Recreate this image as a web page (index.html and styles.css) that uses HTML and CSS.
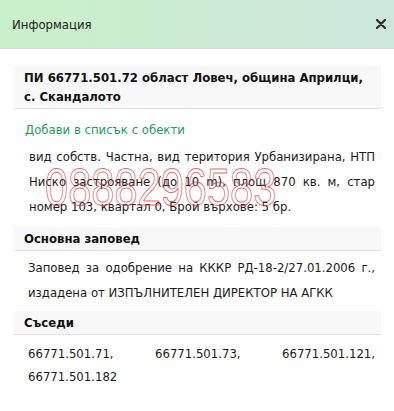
FILE: index.html
```
<!DOCTYPE html>
<html lang="bg">

<head>
    <meta charset="UTF-8">
    <meta name="viewport" content="width=device-width, initial-scale=1.0">
    <title>Информация</title>
    <link rel="stylesheet" href="styles.css">
</head>

<body>
    <div class="info-header">
        <span class="info-title">Информация</span>
        <button type="button" class="close-button" aria-label="Затвори">
            <svg width="10" height="10" viewBox="0 0 10 10">
                <path d="M1 1 L9 9 M9 1 L1 9" stroke="#2b2b2b" stroke-width="2.2" stroke-linecap="round" />
            </svg>
        </button>
    </div>

    <div class="info-content">
        <div class="section-head">ПИ 66771.501.72 област Ловеч, община Априлци, с. Скандалото</div>
        <a href="#" class="add-link">Добави в списък с обекти</a>
        <p class="info-text">вид собств. Частна, вид територия Урбанизирана, НТП Ниско застрояване (до 10 m), площ 870 кв. м, стар номер 103, квартал 0, Брой върхове: 5 бр.</p>
        <span class="watermark">0888296583</span>

        <div class="section-head section-gap">Основна заповед</div>
        <p class="info-text order-text">Заповед за одобрение на КККР РД-18-2/27.01.2006 г., издадена от ИЗПЪЛНИТЕЛЕН ДИРЕКТОР НА АГКК</p>

        <div class="section-head neighbours-gap">Съседи</div>
        <p class="info-text neighbours">66771.501.71, 66771.501.73, 66771.501.121, 66771.501.182</p>
    </div>
</body>
</html>
```

FILE: styles.css
```
body {
    font-family: "DejaVu Sans Condensed", "DejaVu Sans", Verdana, sans-serif;
    font-size: 13px;
    color: #1a1a1a;
    background-color: #ffffff;
    margin: 0;
    padding: 0;
}

.info-header {
    height: 48px;
    display: flex;
    align-items: center;
    justify-content: space-between;
    padding: 0 7px 0 12px;
    background: linear-gradient(to right, #c9f1c9, #cce6dc);
    border-bottom: 1px solid #d4dcd8;
}

.info-title {
    font-size: 13px;
    color: #222222;
}

.close-button {
    background: none;
    border: none;
    padding: 0;
    width: 10px;
    height: 10px;
    margin-right: 1px;
    cursor: pointer;
    display: flex;
}

.info-content {
    position: relative;
    padding: 17px 13px 20px 14px;
}

.section-head {
    background-color: #f8f8f8;
    border-bottom: 1px solid #e2e2e2;
    padding: 2px 10px;
    line-height: 19px;
    font-weight: bold;
    color: #111111;
}

.add-link {
    display: block;
    margin: 11px 0 0 11px;
    line-height: 19px;
    color: #1f9a5c;
    text-decoration: none;
}

.info-text {
    margin: 5px 0 0;
    padding: 0 6px 0 15px;
    line-height: 25px;
    text-align: justify;
    color: #1a1a1a;
}

.watermark {
    position: absolute;
    left: 45px;
    top: 112px;
    font-family: "Liberation Sans", Arial, sans-serif;
    font-size: 52px;
    line-height: 52px;
    color: transparent;
    -webkit-text-stroke: 1px rgba(214, 60, 60, 0.75);
    transform: scaleX(0.8);
    transform-origin: left top;
    pointer-events: none;
}

.section-gap {
    margin-top: 8px;
}

.order-text {
    margin-top: 4px;
    padding-left: 14px;
}

.neighbours-gap {
    margin-top: 6px;
}

.neighbours {
    margin-top: 7px;
    padding-left: 14px;
    line-height: 23px;
}
```
